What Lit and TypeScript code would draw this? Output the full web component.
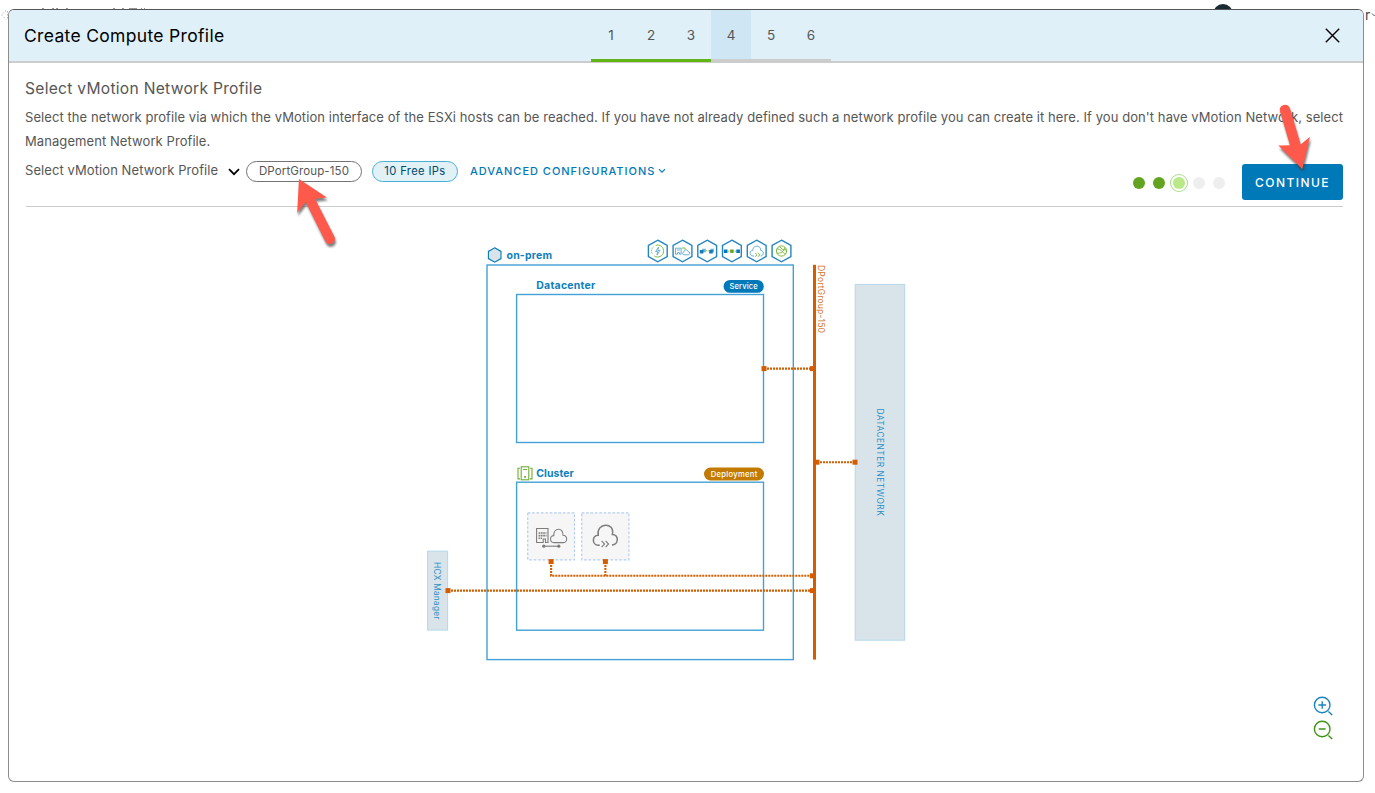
import { LitElement, html, svg, css } from "lit";
import { customElement } from "lit/decorators.js";
import { classMap } from "lit/directives/class-map.js";

const BLUE = "#0079b8";
const ORANGE = "#d45d00";

@customElement("network-diagram")
class NetworkDiagram extends LitElement {
  static styles = css`
    :host { display: block; }
    svg { display: block; font-family: Inter, "Liberation Sans", sans-serif; }
    .frame { fill: #fff; stroke: #43a1d5; stroke-width: 1.4; }
    .band { fill: #d9e4ea; stroke: #b5d8e9; stroke-width: 1; }
    .title { font-size: 10.5px; font-weight: 700; fill: #0f80bc; }
    .pill { font-size: 7.6px; font-weight: 500; fill: #fff; text-anchor: middle; }
    .side { font-size: 8.4px; fill: #2f8fc4; }
    .port { font-size: 8.6px; fill: #d8732a; }
    .wire { fill: none; stroke: #d45d00; stroke-width: 2.1; stroke-dasharray: 2 1; }
    .tile { fill: #f6f6f6; stroke: #b4cdf3; stroke-width: 1.2; stroke-dasharray: 2.6 1.8; }
    .grey { fill: none; stroke: #7d7d7d; stroke-width: 1.1; }
    .bold { stroke-width: 1.5; }
    .hex { fill: #fff; stroke: #2385c0; stroke-width: 1.4; }
    .thin { fill: none; stroke: #5ba9d3; stroke-width: 0.9; }
    .green { fill: none; stroke: #7dbb42; stroke-width: 1; }
  `;

  private hex(x: number) {
    return svg`<polygon class="hex" transform="translate(${x} 251)" points="0,-10.8 9.4,-5.5 9.4,5.5 0,10.8 -9.4,5.5 -9.4,-5.5"/>`;
  }

  private plug(x: number, y: number) {
    return svg`<rect x=${x - 2.5} y=${y - 2.5} width="5" height="5" fill=${ORANGE}/>`;
  }

  render() {
    return html`
      <svg width="500" height="440" viewBox="420 230 500 440">
        <rect class="frame" x="487" y="265" width="306.3" height="394.6" />
        <rect class="frame" x="516.6" y="294.5" width="246.9" height="148" />
        <rect class="frame" x="516.6" y="482.2" width="246.9" height="148" />

        <polygon points="494.7,247.8 501,251.4 501,258.6 494.7,262.2 488.4,258.6 488.4,251.4" fill="#d9e4ea" stroke=${BLUE} stroke-width="1.1" />
        <text class="title" x="506.5" y="258.6" textLength="45.5">on-prem</text>
        <text class="title" x="536.3" y="289.2" textLength="59">Datacenter</text>
        <text class="title" x="536.3" y="476.6" textLength="37.5">Cluster</text>

        <g fill="none" stroke="#70ac35" stroke-width="1.1">
          <rect x="521.2" y="466.8" width="7.6" height="13" />
          <path d="M523 469.5h4M520 468.3h-2v10.6h2M530 468.3h2v10.6h-2" />
        </g>
        <rect x="524.2" y="476" width="1.6" height="1.8" fill="#62a420" />

        <rect x="723.6" y="280" width="40.2" height="12.8" rx="6.4" fill=${BLUE} />
        <text class="pill" x="743.6" y="289.1" textLength="28">Service</text>
        <rect x="704" y="467.6" width="60" height="12.8" rx="6.4" fill="#c27b00" />
        <text class="pill" x="734" y="476.6" textLength="46.5">Deployment</text>

        ${[657.8, 682.5, 707.2, 731.9, 756.7, 781.5].map((x) => this.hex(x))}
        <g transform="translate(657.8 251)">
          <path class="green" d="M-2 -5.7A6 6 0 1 1 -3.5 5" />
          <path class="green" d="M-5.8 2.5A6 6 0 0 1 -4 -4.5" stroke-dasharray="1.4 1" />
          <path class="thin" d="M.8 -4L-2.2 .6H0L-.8 4L2.2 -.6H0Z" />
        </g>
        <g transform="translate(682.5 251)">
          <path class="thin" d="M-7 -2.8H-1.4V3.2H-3V1.6H-5V3.2H-7ZM-5.5 -1h3" />
          <path class="green" d="M-.8 -3H2.6V-1.4" />
          <path class="thin" d="M1.5 3.8C-.5 3.6 -.2 .8 1.4 .9C1.8 -2 5.4 -1.5 5.4 .5C8 .8 7.5 3.8 6 3.8Z" />
        </g>
        <g transform="translate(707.2 251)">
          <path d="M-5 -2.2h3.6v3.4h-3.6zM3.2 -2.2h3.6v3.4h-3.6z" fill="#6cb2da" />
          <path d="M-7.4 -1h3.6v3.6h-3.6zM2 -1h3.6v3.6h-3.6z" fill="#1679b8" />
          <path class="green" d="M-1.2 -.2H2" stroke-dasharray="1 .8" />
        </g>
        <g transform="translate(731.9 251)">
          <path d="M-8 -1.5h3.6v3.4h-3.6zM4.4 -1.5h3.6v3.4h-3.6z" fill="#0079b8" />
          <path class="green" d="M-4 .2H4" stroke-dasharray="1 .8" />
          <rect x="-1.7" y="-1.5" width="3.4" height="3.4" fill="#62a420" />
        </g>
        <g transform="translate(756.7 251)">
          <path class="thin" d="M-2.5 5C-7.8 5.8 -7.6 -.8 -3.9 -.7C-3.7 -6.6 4.4 -6 3.9 -.7C7.6 -.4 7.4 5 3.8 5" />
          <path class="green" d="M-1.5 1.8L.2 3.8L-1.5 5.8M1.4 1.8L3.1 3.8L1.4 5.8" />
        </g>
        <g transform="translate(781.5 251)">
          <circle class="green" r="5.1" />
          <path class="green" d="M-4.6 -2C-1 -2.6 1 1.8 4 3M-4.6 2C-1 3 2.6 .4 3.4 -3.6M-2 -4.6C-.5 -2 2 -1 4.8 -1" />
        </g>

        <rect class="band" x="855.2" y="284.4" width="49.5" height="355.8" />
        <text class="side" transform="translate(876.8 408.4) rotate(90)" textLength="107.5">DATACENTER NETWORK</text>
        <rect class="band" x="427.6" y="551.1" width="20" height="79" />
        <text class="side" transform="translate(434.2 562) rotate(90)" textLength="57.5">HCX Manager</text>

        <rect class="tile" x="527.7" y="512.8" width="46.8" height="47" />
        <rect class="tile" x="581.7" y="512.8" width="47.2" height="47" />
        <g transform="translate(551 537)">
          <path class="grey" d="M-14.4 -8.5H-3V5.5H-5.5V2H-7.8V5.5H-14.4Z" />
          <path d="M-12.4 -4H-4.5M-12.4 -1.4H-4.5M-12.4 1.2H-9" stroke="#7d7d7d" stroke-width="1.6" stroke-dasharray="1.7 .6" />
          <path class="grey" d="M3 5.6C-1.8 5.4 -1.4 -1.8 2.8 -1.4C2.6 -9.5 12.4 -10 12 -1.8C16.8 -1.6 16.8 5.6 12.4 5.6Z" />
          <path class="grey" d="M-7 9.2H7.8" />
          <circle cx="-7.2" cy="9.2" r="1.6" fill="#7d7d7d" />
          <circle cx="7.8" cy="9.2" r="1.6" fill="#7d7d7d" />
        </g>
        <g transform="translate(605.4 537)">
          <path class="grey bold" d="M-5.6 8.2H-7C-13.8 8 -13.6 -1.8 -7.2 -1.8C-9.4 -14.6 9.6 -15.4 7 -2.6C13.6 -2.6 13.6 7.6 6.6 8" />
          <path class="grey" d="M-3.8 3.8L-.8 7L-3.8 10.2M.2 3.8L3.2 7L.2 10.2" />
        </g>

        <path class="wire" d="M764 368.6H812" />
        <path class="wire" d="M817 462.2H855" />
        <path class="wire" d="M551.1 562V575.8H812" />
        <path class="wire" d="M605.4 562V575.8" />
        <path class="wire" d="M448 590.6H812" />
        <rect x="813" y="264.8" width="3" height="394.8" fill=${ORANGE} />
        <text class="port" transform="translate(818 265) rotate(90)" textLength="68">DPortGroup-150</text>
        ${[[764, 368.6], [812.4, 368.6], [817, 462.2], [855, 462.2], [551.1, 561.6], [605.4, 561.6], [812.4, 575.8], [448, 590.6], [812.4, 590.6]].map(([x, y]) => this.plug(x, y))}
      </svg>
    `;
  }
}

@customElement("app-root")
class AppRoot extends LitElement {
  static styles = css`
    :host {
      display: block;
      position: relative;
      box-sizing: border-box;
      height: 793px;
      padding: 9px 11px 11px 8px;
      overflow: hidden;
      background: #fff;
      color: #565656;
      font-family: Inter, "Liberation Sans", sans-serif;
    }
    .behind { position: absolute; left: 0; top: 0; }
    .behind text { font-size: 14px; fill: #4a4a4a; }
    .dialog {
      position: relative;
      box-sizing: border-box;
      display: flex;
      flex-direction: column;
      height: 773px;
      border: 1px solid #8c8c8c;
      border-top-color: #565656;
      border-radius: 6px;
      overflow: hidden;
      background: #fff;
    }
    .header {
      display: grid;
      grid-template-columns: 582px 240px 1fr;
      height: 51px;
      background: #dff0f9;
      border-bottom: 2px solid #ccc;
    }
    .heading { padding-left: 15px; line-height: 51px; font-size: 17.5px; color: #000; letter-spacing: 0.32px; white-space: nowrap; }
    .steps { display: flex; height: 52px; position: relative; }
    .step {
      box-sizing: border-box;
      width: 40px;
      height: 52px;
      border-bottom: 3px solid #ccc;
      text-align: center;
      line-height: 51px;
      font-size: 13.5px;
    }
    .step.done { border-color: #60b515; }
    .step.current { background: #cfe7f4; }
    .close { justify-self: end; margin: 18px 23px 0 0; }
    .body { flex: 1; padding: 0 20px 0 16px; }
    .subtitle { margin: 16px 0 0; font-size: 15.6px; line-height: 20px; font-weight: 400; letter-spacing: 0.28px; }
    .intro { margin: 6px -10px 0 0; font-size: 13px; line-height: 24px; letter-spacing: 0.077px; white-space: nowrap; }
    .toolbar { display: flex; height: 53px; border-bottom: 1px solid #ccc; margin-left: 1px; }
    .controls { display: flex; align-items: center; height: 21px; margin: 8px 0 0 -1px; }
    .picker { width: 194px; font-size: 13px; line-height: 19px; padding-bottom: 2px; letter-spacing: 0.08px; white-space: nowrap; }
    .chevron { margin: 0 6px 0 9px; }
    .chip {
      box-sizing: border-box;
      height: 21px;
      border: 1px solid #737373;
      border-radius: 11px;
      text-align: center;
      font-size: 11.5px;
      line-height: 19px;
      letter-spacing: 0.12px;
      width: 116px;
      white-space: nowrap;
    }
    .chip.info { width: 86px; margin-left: 10px; background: #e1f1f6; border-color: #49afd9; color: #004a70; font-size: 11.2px; letter-spacing: 0.36px; }
    .advanced { display: flex; align-items: center; gap: 3px; margin-left: 12px; padding-bottom: 2px; color: #0079b8; font-size: 11px; font-weight: 500; letter-spacing: 0.98px; white-space: nowrap; }
    .actions { display: flex; align-items: center; height: 36px; margin: 11px 0 0 auto; }
    .dots { display: flex; align-items: center; gap: 8px; margin: 2px 17px 0 0; }
    .dot { width: 12px; height: 12px; border-radius: 50%; background: #eee; }
    .dot.full { background: #62a420; }
    .dot.now { background: #b8e986; box-shadow: 0 0 0 2px #fff, 0 0 0 3px #aadb8b; }
    .continue {
      width: 101px;
      height: 36px;
      padding: 2px 0 0;
      border: 0;
      border-radius: 3px;
      background: #0079b8;
      color: #fff;
      font: 500 12px/34px Inter, "Liberation Sans", sans-serif;
      letter-spacing: 1.45px;
    }
    .stage { padding: 23px 0 0 395px; }
    .zoom { position: absolute; right: 30px; bottom: 41px; display: flex; flex-direction: column; gap: 4px; }
    .zoom svg, .close svg { display: block; }
    .pointers { position: absolute; left: 0; top: 0; filter: drop-shadow(1px 3px 1px rgba(60, 60, 60, 0.65)); pointer-events: none; }
  `;

  private steps = [1, 2, 3, 4, 5, 6];
  private progress = ["full", "full", "now", "", ""];

  render() {
    return html`
      <svg class="behind" width="1375" height="40">
        <path d="M42 8.6h2M52 8.6h2M56 8.6h2M66 8.6h2M113 8.6h2M122 8.6h2M129 8.6h8M141 8.6h1M144 8.6h1" stroke="#8a8a8a" stroke-width="1" />
        <path d="M6 10.5L1.5 15L6 19.5M7.5 11V19" fill="none" stroke="#bbb" stroke-dasharray="1.5 1.5" />
        <circle cx="1223" cy="14" r="10" fill="#1b2a32" />
        <text x="1365" y="20">r</text>
        <path d="M1372 13.5l2.5 2.5l2.5 -2.5" fill="none" stroke="#565656" />
      </svg>

      <div class="dialog">
        <div class="header">
          <div class="heading">Create Compute Profile</div>
          <div class="steps">
            ${this.steps.map((n) => html`<div class=${classMap({ step: true, done: n < 4, current: n === 4 })}>${n}</div>`)}
          </div>
          <div class="close">
            <svg width="15" height="15" viewBox="0 0 15 15"><path d="M.8 .8L14.2 14.2M14.2 .8L.8 14.2" stroke="#000" stroke-width="1.4" /></svg>
          </div>
        </div>

        <div class="body">
          <h2 class="subtitle">Select vMotion Network Profile</h2>
          <p class="intro">
            <span class="line">Select the network profile via which the vMotion interface of the ESXi hosts can be reached. If you have not already defined such a network profile you can create it here. If you don't have vMotion Network, select</span><br />
            <span class="line">Management Network Profile.</span>
          </p>
          <div class="toolbar">
            <div class="controls">
              <span class="picker">Select vMotion Network Profile</span>
              <svg class="chevron" width="12" height="8" viewBox="0 0 12 8"><path d="M1 1.2L6 6.2L11 1.2" fill="none" stroke="#000" stroke-width="1.7" /></svg>
              <span class="chip">DPortGroup-150</span>
              <span class="chip info">10 Free IPs</span>
              <span class="advanced">ADVANCED CONFIGURATIONS
                <svg width="8" height="6" viewBox="0 0 8 6"><path d="M1 1.2L4 4.2L7 1.2" fill="none" stroke="#0079b8" stroke-width="1.1" /></svg>
              </span>
            </div>
            <div class="actions">
              <div class="dots">
                ${this.progress.map((s) => html`<span class=${classMap({ dot: true, full: s === "full", now: s === "now" })}></span>`)}
              </div>
              <button class="continue">CONTINUE</button>
            </div>
          </div>
          <div class="stage"><network-diagram></network-diagram></div>
        </div>

        <div class="zoom">
          <svg width="20" height="20" viewBox="0 0 20 20" fill="none" stroke="#1b84c0" stroke-width="1.4"><circle cx="9.2" cy="9" r="7.8" /><path d="M5.4 9h7.6M9.2 5.2v7.6M15.4 15.4l3.8 3.6" /></svg>
          <svg width="20" height="20" viewBox="0 0 20 20" fill="none" stroke="#3f9315" stroke-width="1.4"><circle cx="9.2" cy="9" r="7.8" /><path d="M5.8 9h6.8M15.4 15.4l3.8 3.6" /></svg>
        </div>
      </div>

      <svg class="pointers" width="1375" height="260" fill="#ff594c">
        <path d="M299 179L327 197.5L315 198.8L334.2 236.3A5 5 0 0 1 325.4 241.6L305.8 202L297.2 213Z" />
        <path d="M1302.3 169L1278.3 145.5L1290 145.2L1279.8 110.5A5.2 5.2 0 0 1 1289.8 108L1300.6 144.6L1310 136.8Z" />
      </svg>
    `;
  }
}
